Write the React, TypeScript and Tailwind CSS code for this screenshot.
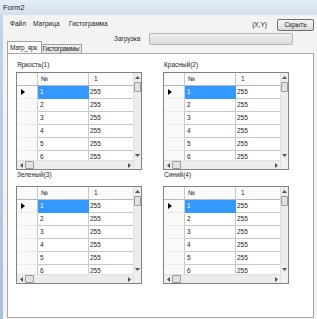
const ROWS = [1, 2, 3, 4, 5, 6]

function Grid() {
  return (
    <div className="flex w-[126px] h-[98px] border border-[#7f8389] bg-white">
      <div className="flex flex-col w-[116px]">
        <div className="flex h-[13px] border-b border-[#b9b9b9] bg-[#fbfbfb]">
          <div className="w-[21px] border-r border-[#c9c9c9]" />
          <div className="w-[51px] pl-[3px] leading-[12px] border-r border-[#c9c9c9]">№</div>
          <div className="w-[44px] pl-[5px] leading-[12px]">1</div>
        </div>
        <div className="h-[74px] overflow-hidden">
          {ROWS.map((r) => (
            <div key={r} className="flex h-[13px]">
              <div className="w-[21px] flex items-center pl-[4px] bg-[#fafafa] border-r border-[#c9c9c9] border-b border-b-[#ececec]">
                {r === 1 && (
                  <svg width="4" height="6" viewBox="0 0 4 6">
                    <path d="M0 0 L4 3 L0 6 Z" fill="#000" />
                  </svg>
                )}
              </div>
              <div
                className={`w-[51px] pl-[2px] leading-[12px] border-r border-b ${
                  r === 1 ? 'bg-[#3399ff] text-white border-[#3399ff]' : 'border-[#c9c9c9]'
                }`}
              >
                {r}
              </div>
              <div className="w-[44px] pl-[1px] leading-[12px] border-b border-[#c9c9c9]">255</div>
            </div>
          ))}
        </div>
        <div className="flex items-center h-[9px] bg-[#ececec] border-t border-[#e0e0e0]">
          <div className="w-[8px] flex justify-center">
            <svg width="3" height="5" viewBox="0 0 3 5">
              <path d="M3 0 L0 2.5 L3 5 Z" fill="#555" />
            </svg>
          </div>
          <div className="w-[9px] h-[8px] rounded-[1px] border border-[#9a9a9a] bg-[#e2e2e2]" />
          <div className="flex-1" />
          <div className="w-[8px] flex justify-center">
            <svg width="3" height="5" viewBox="0 0 3 5">
              <path d="M0 0 L3 2.5 L0 5 Z" fill="#555" />
            </svg>
          </div>
        </div>
      </div>
      <div className="flex flex-col w-[8px] bg-[#ececec] border-l border-[#e0e0e0]">
        <div className="h-[9px] flex items-center justify-center">
          <svg width="5" height="3" viewBox="0 0 5 3">
            <path d="M0 3 L2.5 0 L5 3 Z" fill="#555" />
          </svg>
        </div>
        <div className="h-[10px] rounded-[1px] border border-[#9a9a9a] bg-[#e2e2e2]" />
        <div className="flex-1" />
        <div className="h-[9px] flex items-center justify-center">
          <svg width="5" height="3" viewBox="0 0 5 3">
            <path d="M0 0 L2.5 3 L5 0 Z" fill="#555" />
          </svg>
        </div>
        <div className="h-[9px] bg-[#f0f0f0]" />
      </div>
    </div>
  )
}

function Block({ title, gap }: { title: string; gap: string }) {
  return (
    <div className="flex flex-col w-[126px]">
      <div className={`h-[10px] leading-[10px] pl-[1px] ${gap}`}>{title}</div>
      <Grid />
    </div>
  )
}

export default function App() {
  return (
    <div className="w-[317px] h-[319px] overflow-hidden flex flex-col bg-[#f3f3f3] text-[6.5px] text-[#1e1e1e] font-['Liberation_Sans',Arial,sans-serif]">
      <div className="h-[15px] flex items-center pl-[3px] text-[7.5px] bg-gradient-to-b from-[#e6eef7] to-[#d3e0ee]">
        Form2
      </div>
      <div className="flex flex-1">
        <div className="w-[3px] bg-gradient-to-b from-[#c2d5ea] to-[#a9c1db]" />
        <div className="flex flex-col flex-1 pr-[3px]">
          <div className="flex items-center h-[17px] pl-[7px]">
            <span className="w-[23px]">Файл</span>
            <span className="w-[36px]">Матрица</span>
            <span>Гистограмма</span>
            <span className="ml-auto mr-[10px] mt-[2px]">(X,Y)</span>
            <div className="w-[37px] h-[12px] mt-[2px] flex items-center justify-center rounded-[2px] border border-[#707070] bg-gradient-to-b from-[#f4f4f4] to-[#dadada]">
              Скрыть
            </div>
          </div>
          <div className="flex h-[21px]">
            <div className="flex items-end pl-[4px] w-[79px]">
              <div className="relative z-10 w-[35px] h-[12px] leading-[11px] pl-[2px] bg-white border border-b-0 border-[#a0a0a0] rounded-t-[1px] whitespace-nowrap tracking-[-0.3px]">
                Матр_ярк
              </div>
              <div className="w-[41px] h-[9px] leading-[8px] pl-[1px] bg-gradient-to-b from-[#f2f2f2] to-[#e0e0e0] border border-l-0 border-b-0 border-[#a0a0a0] whitespace-nowrap overflow-hidden tracking-[-0.3px]">
                Гистограммы
              </div>
            </div>
            <div className="flex items-start pt-[1px]">
              <span className="ml-[32px] w-[35px] leading-[12px]">Загрузка</span>
              <div className="w-[144px] h-[12px] rounded-[2px] border border-[#b4b4b4] bg-gradient-to-b from-[#eeeeee] to-[#dcdcdc]" />
            </div>
          </div>
          <div className="ml-[4px] w-[307px] h-[265px] bg-white border border-[#a7a7a7] flex gap-[21px] pl-[8px]">
            <div className="flex flex-col">
              <Block title="Яркость(1)" gap="mt-[6px] mb-[2px]" />
              <Block title="Зеленый(3)" gap="mt-[0px] mb-[6px]" />
            </div>
            <div className="flex flex-col">
              <Block title="Красный(2)" gap="mt-[6px] mb-[2px]" />
              <Block title="Синий(4)" gap="mt-[0px] mb-[6px]" />
            </div>
          </div>
        </div>
      </div>
    </div>
  )
}
